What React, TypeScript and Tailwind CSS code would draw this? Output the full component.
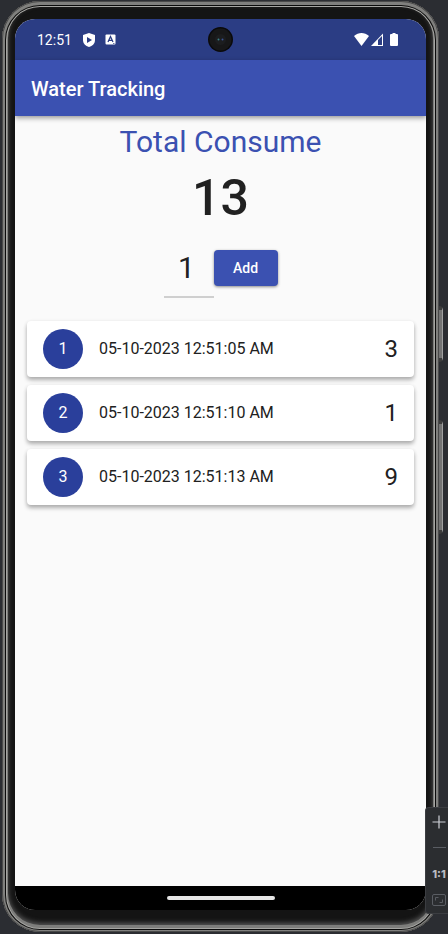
import { useState } from "react";

type Entry = { id: number; time: string; amount: number };

const initialEntries: Entry[] = [
  { id: 1, time: "05-10-2023 12:51:05 AM", amount: 3 },
  { id: 2, time: "05-10-2023 12:51:10 AM", amount: 1 },
  { id: 3, time: "05-10-2023 12:51:13 AM", amount: 9 },
];

function StatusBar() {
  return (
    <div className="relative flex h-[41px] shrink-0 items-center bg-[#2b3d84] pr-7 pl-[22px] text-white">
      <span className="text-sm">12:51</span>
      <svg className="ml-[10px] size-[14px]" viewBox="0 0 14 14" aria-hidden="true">
        <path d="M7 0 L13 2 V7 C13 10.5 10.5 13 7 14 C3.5 13 1 10.5 1 7 V2 Z" fill="#fff" />
        <path d="M5 4 L10 7 L5 10 Z" fill="#2b3d84" />
      </svg>
      <svg className="ml-[9px] size-[11px]" viewBox="0 0 11 11" aria-hidden="true">
        <rect x="0.5" y="0.5" width="10" height="10" rx="1" fill="#fff" />
        <path d="M3 8 L5.5 2.5 L8 8 M4 6.4 H7" fill="none" stroke="#2b3d84" strokeWidth="1.3" />
        <path d="M8 9.5 H9.5" stroke="#2b3d84" strokeWidth="0.7" />
      </svg>
      <svg className="ml-auto h-[13px] w-[15px]" viewBox="0 0 15 13" aria-hidden="true">
        <path d="M0 3 C4.5 -1 10.5 -1 15 3 L7.5 13 Z" fill="#fff" />
      </svg>
      <svg className="ml-[2px] h-[13px] w-3" viewBox="0 0 12 13" aria-hidden="true">
        <path d="M0 13 L12 0.5 V13 Z" fill="#fff" />
        <path d="M7 7 L11 3 V12 H7 Z" fill="#2b3d84" />
      </svg>
      <svg className="ml-[7px] h-[13px] w-2" viewBox="0 0 8 13" aria-hidden="true">
        <path d="M2.5 0 H5.5 V1 H7 Q8 1 8 2 V12 Q8 13 7 13 H1 Q0 13 0 12 V2 Q0 1 1 1 H2.5 Z" fill="#fff" />
      </svg>
      <div className="absolute inset-x-0 top-2 flex justify-center">
        <svg className="size-[25px]" viewBox="0 0 25 25" aria-hidden="true">
          <circle cx="12.5" cy="12.5" r="12.5" fill="#0a0a0b" />
          <circle cx="12.5" cy="12.5" r="11" fill="#171718" />
          <circle cx="12.5" cy="12.5" r="5.5" fill="#1c1d1f" />
          <circle cx="10.5" cy="12.5" r="1" fill="#3b7f86" />
          <circle cx="14.5" cy="12.5" r="1" fill="#3a5496" />
        </svg>
      </div>
    </div>
  );
}

function EntryCard({ entry, position }: { entry: Entry; position: number }) {
  return (
    <li className="flex h-14 items-center rounded bg-white px-4 shadow-[0_3px_4px_rgba(0,0,0,0.28),0_1px_4px_rgba(0,0,0,0.08)]">
      <span className="flex size-10 items-center justify-center rounded-full bg-[#2a3f9b] text-base text-white">
        {position}
      </span>
      <span className="ml-4 text-base">{entry.time}</span>
      <span className="ml-auto text-2xl">{entry.amount}</span>
    </li>
  );
}

function ZoomToolbar() {
  return (
    <div className="absolute right-0 bottom-5 flex h-[107px] w-[23px] flex-col items-center rounded-l border border-r-0 border-[#3b3d41] bg-[#2b2d30] pt-[7px] pl-1 text-[#ced0d6]">
      <button type="button" aria-label="Zoom in" className="h-[14px]">
        <svg className="size-[14px]" viewBox="0 0 14 14" aria-hidden="true">
          <path d="M7 0.5 V13.5 M0.5 7 H13.5" stroke="currentColor" strokeWidth="1.2" />
        </svg>
      </button>
      <span className="mt-[18px] h-px w-[13px] bg-[#5a5d63]" />
      <button
        type="button"
        className="mt-[18px] h-4 font-[Inter,sans-serif] text-[11px] leading-4 font-extrabold text-[#b9bbc0]"
      >
        1:1
      </button>
      <button type="button" aria-label="Fit to screen" className="mt-3">
        <svg className="h-3 w-[14px]" viewBox="0 0 14 12" fill="none" stroke="#5a5d63" aria-hidden="true">
          <rect x="0.5" y="0.5" width="13" height="11" rx="1.5" />
          <path d="M3.5 6.5 V3.5 H6.5 M7.5 8.5 H10.5 V5.5" />
        </svg>
      </button>
    </div>
  );
}

export default function App() {
  const [entries, setEntries] = useState(initialEntries);
  const [amount, setAmount] = useState("1");
  const total = entries.reduce((sum, entry) => sum + entry.amount, 0);

  const addEntry = () => {
    const value = Number(amount);
    if (!value) return;
    setEntries([...entries, { id: entries.length + 1, time: new Date().toLocaleString(), amount: value }]);
  };

  return (
    <div className="relative flex min-h-screen overflow-hidden bg-[#2b2d32] pt-px pr-[9px] pb-0.5 pl-0.5 font-[Roboto,sans-serif] text-[#212121]">
      <div className="absolute top-[306px] right-[5px] h-14 w-1 rounded-r-sm border-y-4 border-r border-y-[#3c3c3c] border-r-[#a0a0a0] bg-[#747474]" />
      <div className="absolute top-[420px] right-[5px] h-[114px] w-1 rounded-r-sm border-y-4 border-r border-y-[#3c3c3c] border-r-[#a0a0a0] bg-[#747474]" />

      <div className="flex flex-1 flex-col rounded-[38px] bg-[#141414] px-[13px] pt-[18px] pb-[22px] shadow-[inset_0_0_0_1px_#4a4a4a,inset_0_1px_0_3px_#80807e,inset_0_1px_0_4px_#0b0b0b,inset_0_1px_0_5px_#a5a5a2,inset_0_-1px_0_6px_#7d7d7b,inset_0_-3px_5px_6px_#5a5a5a]">
        <div className="flex flex-1 flex-col overflow-hidden rounded-[20px] bg-[#fafafa]">
          <StatusBar />
          <header className="z-10 flex h-14 shrink-0 items-center bg-[#3b51b1] px-4 pt-0.5 shadow-[0_2px_5px_rgba(0,0,0,0.4)]">
            <h1 className="text-xl font-medium text-white">Water Tracking</h1>
          </header>

          <main className="flex flex-1 flex-col px-3 pt-2">
            <h2 className="text-center text-[30px] leading-9 text-[#3b51b1]">Total Consume</h2>
            <p className="mt-2 text-center text-[50px] leading-[60px] font-medium">{total}</p>
            <div className="mt-[10px] flex h-[60px] justify-center">
              <input
                type="text"
                inputMode="numeric"
                aria-label="Amount"
                value={amount}
                onChange={(event) => setAmount(event.target.value)}
                className="w-[50px] border-b-2 border-[#cfcfcf] bg-transparent pr-1 text-center text-[30px] outline-none"
              />
              <button
                type="button"
                onClick={addEntry}
                className="mt-3 h-9 w-16 self-start rounded bg-[#3b51b1] text-sm font-medium text-white shadow-[0_1px_3px_rgba(0,0,0,0.45)]"
              >
                Add
              </button>
            </div>
            <ul className="mt-[23px] flex flex-col gap-2">
              {entries.map((entry, index) => (
                <EntryCard key={entry.id} entry={entry} position={index + 1} />
              ))}
            </ul>
          </main>

          <div className="flex h-6 shrink-0 items-center justify-center bg-black">
            <span className="h-1 w-[108px] rounded-full bg-[#e6e6e6]" />
          </div>
        </div>
      </div>

      <ZoomToolbar />
    </div>
  );
}
